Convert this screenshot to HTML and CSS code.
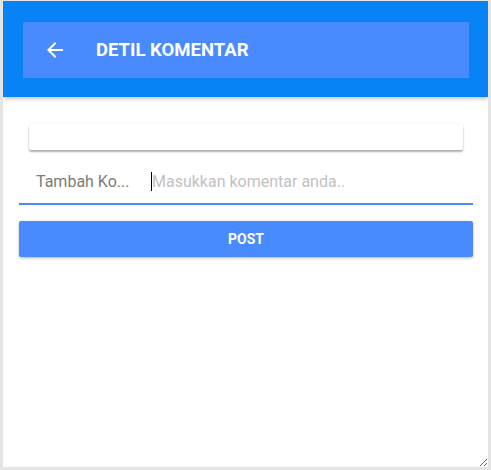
FILE: index.html
```html
<!DOCTYPE html>
<html>
<head>
<meta charset="utf-8">
<link rel="stylesheet" href="styles.css">
</head>
<body>
<div class="frame">
  <header class="appbar">
    <div class="toolbar">
      <svg class="back" viewBox="0 0 24 24" width="24" height="24"><path fill="#fff" d="M20 11H7.83l5.59-5.59L12 4l-8 8 8 8 1.41-1.41L7.83 13H20v-2z"/></svg>
      <h1 class="title">DETIL KOMENTAR</h1>
    </div>
  </header>
  <main class="content">
    <div class="card"></div>
    <label class="field">
      <span class="field-label">Tambah Ko...</span>
      <span class="caret"></span>
      <span class="placeholder">Masukkan komentar anda..</span>
    </label>
    <button class="post">POST</button>
  </main>
</div>
</body>
</html>
```
FILE: styles.css
```css
html, body {
  margin: 0;
  padding: 0;
  background: #e4e4e4;
  font-family: Roboto, "Noto Sans", sans-serif;
}
body {
  padding: 1px 3px 3px 3px;
  height: 470px;
  box-sizing: border-box;
}
.frame {
  width: 485px;
  height: 466px;
  background: #fff;
  resize: both;
  overflow: hidden;
  display: flex;
  flex-direction: column;
}
.appbar {
  background: #0883f5;
  padding: 21px 19px 19px 20px;
  box-shadow: 0 2px 4px rgba(0,0,0,0.22);
  position: relative;
  z-index: 1;
}
.toolbar {
  background: #4a8aff;
  height: 56px;
  display: flex;
  align-items: center;
  padding-left: 20px;
}
.back {
  display: block;
  margin-right: 29px;
}
.title {
  margin: 0;
  color: #fff;
  font-size: 18.5px;
  font-weight: 700;
  letter-spacing: 0;
}
.content {
  padding: 27px 15px 0 16px;
  display: flex;
  flex-direction: column;
}
.card {
  height: 26px;
  margin: 0 10px 0 10px;
  background: #fff;
  border-radius: 2px;
  box-shadow: 0 2px 2px rgba(0,0,0,0.3), 0 0 2px rgba(0,0,0,0.1);
}
.field {
  margin-top: 21px;
  height: 31px;
  padding-top: 1px;
  border-bottom: 2px solid #4a8aff;
  display: flex;
  align-items: flex-start;
  padding-left: 17px;
  font-size: 16px;
}
.field-label {
  color: #7b7b7b;
  width: 115px;
}
.caret {
  width: 1px;
  height: 19px;
  background: #000;
}
.placeholder {
  color: #c2c2c2;
}
.post {
  margin-top: 16px;
  height: 36px;
  border: none;
  border-radius: 2px;
  background: #4a8aff;
  color: #fff;
  font-family: Roboto, sans-serif;
  font-weight: 700;
  font-size: 14px;
  box-shadow: 0 1px 3px rgba(0,0,0,0.3);
  padding: 0;
}
```
